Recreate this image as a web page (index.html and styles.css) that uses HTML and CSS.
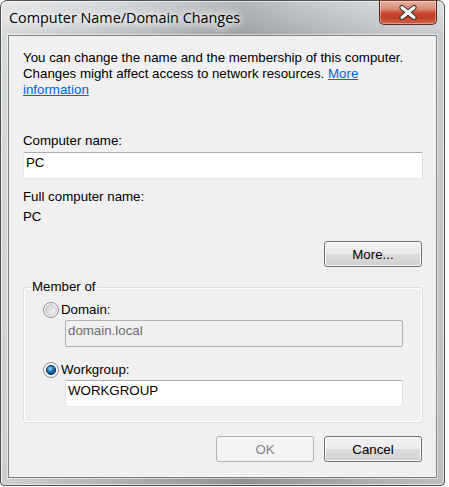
FILE: index.html
```html
<!DOCTYPE html>
<html>
<head>
<meta charset="utf-8">
<link rel="stylesheet" href="styles.css">
</head>
<body>
<div class="window">
  <div class="titlebar">
    <span class="title">Computer Name/Domain Changes</span>
    <div class="close">
      <svg width="20" height="15" viewBox="0 0 20 15">
        <path d="M4 2.5 L16 12.5 M16 2.5 L4 12.5" stroke="#3b3535" stroke-width="5.2" stroke-linecap="round" fill="none"/>
        <path d="M4 2.5 L16 12.5 M16 2.5 L4 12.5" stroke="#ffffff" stroke-width="3" stroke-linecap="round" fill="none"/>
      </svg>
    </div>
  </div>
  <div class="client">
    <p class="intro">You can change the name and the membership of this computer. Changes might affect access to network resources. <a class="link" href="#">More information</a></p>
    <div class="lbl lbl-first">Computer name:</div>
    <div class="textbox">PC</div>
    <div class="lbl lbl-full">Full computer name:</div>
    <div class="value">PC</div>
    <div class="row-right"><button class="btn">More...</button></div>
    <fieldset class="group">
      <legend class="legend">Member of</legend>
      <div class="group-body">
        <div class="radio-row radio-first">
          <svg class="radio" width="16" height="16" viewBox="0 0 16 16">
            <defs>
              <linearGradient id="rgA" x1="0" y1="0" x2="1" y2="1">
                <stop offset="0" stop-color="#c9c9c9"/>
                <stop offset="1" stop-color="#fbfbfb"/>
              </linearGradient>
            </defs>
            <circle cx="8" cy="8" r="7.5" fill="#f6f6f6" stroke="#8e8f8f"/>
            <circle cx="8" cy="8" r="5.3" fill="url(#rgA)" stroke="#bdbdbd" stroke-width="0.8"/>
          </svg>
          <span>Domain:</span>
        </div>
        <div class="textbox sub disabled">domain.local</div>
        <div class="radio-row radio-second">
          <svg class="radio" width="16" height="16" viewBox="0 0 16 16">
            <defs>
              <radialGradient id="rgB" cx="0.4" cy="0.35" r="0.65">
                <stop offset="0" stop-color="#a9e4ff"/>
                <stop offset="0.35" stop-color="#2f8fd6"/>
                <stop offset="1" stop-color="#0c3c68"/>
              </radialGradient>
            </defs>
            <circle cx="8" cy="8" r="7.5" fill="#f6f6f6" stroke="#8e8f8f"/>
            <circle cx="8" cy="8" r="4.6" fill="url(#rgB)" stroke="#17324c" stroke-width="1"/>
          </svg>
          <span>Workgroup:</span>
        </div>
        <div class="textbox sub">WORKGROUP</div>
      </div>
    </fieldset>
    <div class="actions">
      <button class="btn btn-disabled">OK</button>
      <button class="btn">Cancel</button>
    </div>
  </div>
</div>
</body>
</html>
```

FILE: styles.css
```css
html, body {
  margin: 0;
  background: #ffffff;
}
body {
  font-family: "Liberation Sans", Arial, sans-serif;
  font-size: 13.3px;
  line-height: 16px;
  color: #000;
}
.window {
  width: 445px;
  height: 486px;
  box-sizing: border-box;
  border: 1px solid #4f5356;
  border-radius: 7px 7px 4px 4px;
  padding: 0 7px 7px 7px;
  display: flex;
  flex-direction: column;
  background:
    linear-gradient(90deg, rgba(255,255,255,0.45) 0, rgba(255,255,255,0.1) 25%, rgba(0,0,0,0.14) 55%, rgba(0,0,0,0.05) 70%, rgba(255,255,255,0.15) 90%, rgba(255,255,255,0.25) 100%),
    linear-gradient(180deg, #d3d6d9 0, #b9bdc0 34px, #a7a9ab 100%);
  box-shadow: inset 0 0 0 1px rgba(255,255,255,0.55);
}
.titlebar {
  height: 34px;
  display: flex;
  justify-content: space-between;
  align-items: flex-start;
}
.title {
  font-family: "Open Sans", "Noto Sans", sans-serif;
  font-size: 14.4px;
  line-height: 20px;
  margin-top: 7px;
  padding-left: 1px;
  color: #000;
  text-shadow: 0 0 6px #fff, 0 0 10px #fff, 0 0 14px rgba(255,255,255,0.9);
}
.close {
  width: 58px;
  height: 25px;
  margin-top: -1px;
  box-sizing: border-box;
  border: 1px solid #5e2a23;
  border-top-color: #7d3a30;
  border-radius: 0 0 5px 5px;
  background: linear-gradient(180deg, #e8b3a4 0, #dc8b74 35%, #c9482e 52%, #c23f26 72%, #d4664a 100%);
  box-shadow: inset 0 0 0 1px rgba(255,255,255,0.35);
  display: flex;
  align-items: center;
  justify-content: center;
}
.client {
  flex: 1;
  background: #f0f0f0;
  border: 1px solid #7f8385;
  box-shadow: 0 0 0 1px rgba(255,255,255,0.5);
  padding: 14px 13px 14px 14px;
  display: flex;
  flex-direction: column;
  align-items: stretch;
}
.intro {
  margin: 0;
  max-width: 386px;
}
.link {
  color: #0066cc;
  text-decoration: underline;
}
.lbl-first {
  margin-top: 35px;
}
.lbl-full {
  margin-top: 10px;
}
.value {
  margin-top: 4px;
}
.textbox {
  margin-top: 3px;
  height: 27px;
  box-sizing: border-box;
  padding: 2px 2px;
  background: #ffffff;
  border: 1px solid;
  border-color: #abadb3 #dbdfe6 #e3e9ef #e2e3ea;
  border-radius: 2px;
  line-height: 16px;
}
.textbox.disabled {
  background: #f0f0f0;
  color: #6d6d6d;
  border-color: #adb2b5;
}
.row-right {
  margin-top: 16px;
  display: flex;
  justify-content: flex-end;
  padding-right: 1px;
}
.btn {
  width: 98px;
  height: 26px;
  box-sizing: border-box;
  border: 1px solid #707070;
  border-radius: 3px;
  background: linear-gradient(180deg, #f2f2f2 0, #ebebeb 49%, #dddddd 51%, #cfcfcf 100%);
  box-shadow: inset 0 0 0 1px #fbfbfb;
  font-family: "Liberation Sans", Arial, sans-serif;
  font-size: 13.3px;
  color: #000;
  padding: 0;
}
.btn-disabled {
  border-color: #adb2b5;
  background: #f4f4f4;
  box-shadow: none;
  color: #838383;
}
.group {
  margin: 12px 0 0 0;
  padding: 0;
  border: 1px solid #d5dfe5;
  border-radius: 3px;
  box-shadow: inset 0 0 0 1px #ffffff;
  min-width: 0;
}
.legend {
  padding: 0 1px;
  margin-left: 7px;
  line-height: 16px;
}
.group-body {
  padding: 0 18px 15px 19px;
}
.radio-row {
  display: flex;
  align-items: center;
  gap: 2px;
  height: 16px;
}
.radio {
  display: block;
}
.radio-first {
  margin-top: 7px;
}
.radio-second {
  margin-top: 15px;
}
.textbox.sub {
  margin-top: 2px;
  margin-left: 22px;
  width: 338px;
}
.actions {
  margin-top: 13px;
  display: flex;
  justify-content: flex-end;
  gap: 10px;
  padding-right: 1px;
}
```
